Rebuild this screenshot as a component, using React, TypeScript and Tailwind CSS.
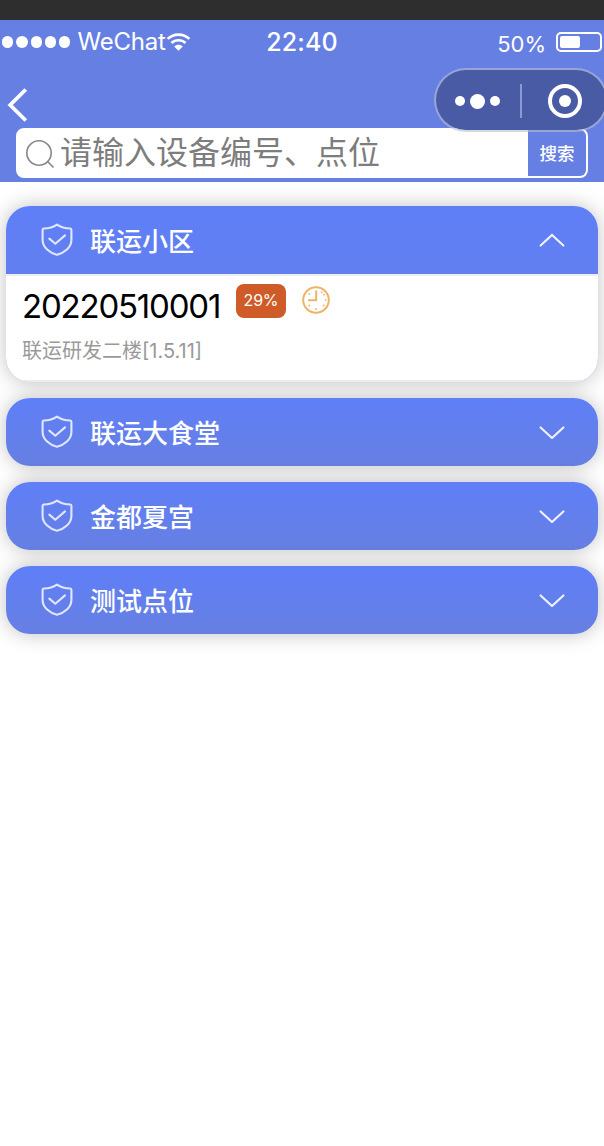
import { useState } from "react";

type Device = {
  id: string;
  level: string;
  place: string;
};

type Site = {
  name: string;
  devices: Device[];
};

const sites: Site[] = [
  {
    name: "联运小区",
    devices: [{ id: "20220510001", level: "29%", place: "联运研发二楼[1.5.11]" }],
  },
  { name: "联运大食堂", devices: [] },
  { name: "金都夏宫", devices: [] },
  { name: "测试点位", devices: [] },
];

function WifiIcon() {
  return (
    <svg width="25" height="20" viewBox="0 0 26 20" fill="none" stroke="#fff" strokeWidth="2.7">
      <path d="M1.7 6.8C8 .8 18 .8 24.3 6.8" />
      <path d="M5.7 11.1C9.8 7.2 16.2 7.2 20.3 11.1" />
      <path d="M13 19.2L8.5 14.7C11.2 12.4 14.8 12.4 17.5 14.7Z" fill="#fff" stroke="none" />
    </svg>
  );
}

function ShieldIcon() {
  return (
    <svg
      width="32"
      height="34"
      viewBox="0 0 32 34"
      fill="none"
      stroke="#e0e6ff"
      strokeWidth="2.1"
      strokeLinecap="round"
      strokeLinejoin="round"
    >
      <path d="M16 1.6C12.5 4 7.5 5.4 2.7 5.5Q1.6 5.6 1.6 6.8V17C1.6 24.5 8.8 30.2 16 31.8C23.2 30.2 30.4 24.5 30.4 17V6.8Q30.4 5.6 29.3 5.5C24.5 5.4 19.5 4 16 1.6Z" />
      <path d="M8.3 15.6L14.3 20.8L24 12.4" />
    </svg>
  );
}

function Chevron({ open }: { open: boolean }) {
  return (
    <svg width="26" height="14" viewBox="0 0 26 14" fill="none" stroke="#f0f3ff" strokeWidth="2.1">
      <path d={open ? "M1.6 12.6L13 2L24.4 12.6" : "M1.6 2.4L13 13L24.4 2.4"} strokeLinecap="round" />
    </svg>
  );
}

function ClockIcon() {
  return (
    <svg width="28" height="28" viewBox="0 0 28 28" fill="none" stroke="#efb368">
      <circle cx="14" cy="14" r="12.8" strokeWidth="2" />
      <path d="M14.2 4.6V14.2H6" strokeWidth="2" />
      <path
        d="M19.6 6.2l.1.2M22 8.6l-.2.1M23.4 14h.4M21.6 19.4l.2.2M14 22.8v.4M7.2 19.6l.2-.2M7.2 7.8l.2.2"
        strokeWidth="1.7"
        strokeLinecap="round"
      />
    </svg>
  );
}

function StatusBar() {
  return (
    <div className="grid h-11 grid-cols-3 items-center text-white">
      <div className="flex items-center pl-0.5">
        <div className="flex gap-[3px]">
          {[0, 1, 2, 3, 4].map((n) => (
            <span key={n} className="size-[11.3px] rounded-full bg-white" />
          ))}
        </div>
        <span className="ml-[7px] text-[24px] leading-none tracking-[-0.2px]">WeChat</span>
        <WifiIcon />
      </div>
      <div className="text-center text-[25px] leading-none font-medium tracking-[0.1px]">
        <span>22:40</span>
      </div>
      <div className="flex items-center justify-end gap-2.5 pr-0.5">
        <span className="pt-1 text-[22px] leading-none">50%</span>
        <span className="flex h-5 w-[46px] rounded-[5px] border-2 border-white p-0.5">
          <span className="h-3 w-5 rounded-[2px] bg-white" />
        </span>
      </div>
    </div>
  );
}

function Capsule() {
  return (
    <div className="absolute top-12 -right-1 flex h-16 w-[174px] items-center rounded-full border-2 border-[#b9bcc9]/60 bg-[#4a5ba6] bg-clip-padding">
      <div className="flex flex-1 items-center justify-center gap-[5px] pt-0.5 pr-px">
        <span className="size-2.5 rounded-full bg-white" />
        <span className="size-[15px] rounded-full bg-white" />
        <span className="size-2.5 rounded-full bg-white" />
      </div>
      <span className="mt-0.5 h-[34px] w-0.5 bg-[#8d99cf]" />
      <div className="flex flex-1 items-center justify-center pl-0.5">
        <span className="mt-0.5 flex size-[34px] items-center justify-center rounded-full border-4 border-white">
          <span className="size-3 rounded-full bg-white" />
        </span>
      </div>
    </div>
  );
}

function SearchBar() {
  return (
    <div className="mx-4 flex h-[50px] items-center rounded-lg border-2 border-white bg-white">
      <svg
        className="mt-0.5 ml-2 shrink-0"
        width="28"
        height="28"
        viewBox="0 0 28 28"
        fill="none"
        stroke="#888"
        strokeWidth="1.6"
      >
        <circle cx="13" cy="13" r="12.2" />
        <path d="M21.7 21.7L27.5 27.4" />
      </svg>
      <span className="ml-1.5 flex-1 text-[32px] leading-[46px] text-[#7d7d7d]">
        请输入设备编号、点位
      </span>
      <button className="h-[46px] w-[58px] rounded-r-md bg-[#667fe3] pt-0.5 text-[17.5px] font-medium text-white">
        搜索
      </button>
    </div>
  );
}

function SiteCard({ site, open, onToggle }: { site: Site; open: boolean; onToggle: () => void }) {
  return (
    <section className="overflow-hidden rounded-3xl bg-linear-to-b from-[#5f7ff8] to-[#667fe2] shadow-[0_0_20px_rgba(0,0,0,0.25)]">
      <button className="flex h-[68px] w-full items-center pr-[33px] pl-[35px] text-white" onClick={onToggle}>
        <ShieldIcon />
        <span className="ml-[17px] flex-1 pt-[3px] text-left text-[26px] leading-9 font-medium">
          {site.name}
        </span>
        <Chevron open={open} />
      </button>
      {open &&
        site.devices.map((device) => (
          <div key={device.id} className="h-[108px] border-y-2 border-[#eeeef0] bg-white px-4 pt-2">
            <div className="flex h-[46px] items-start">
              <span className="w-[198px] text-[33px] leading-[45px] tracking-[-1.2px] whitespace-nowrap text-black">
                {device.id}
              </span>
              <span className="ml-4 flex h-[34px] w-[50px] items-center justify-center rounded-lg bg-[#cf5b28] pb-0.5 text-[16px] tracking-[-0.2px] text-white">
                {device.level}
              </span>
              <span className="mt-0.5 ml-4">
                <ClockIcon />
              </span>
            </div>
            <p className="pt-[5px] text-[20px] leading-8 text-[#999]">{device.place}</p>
          </div>
        ))}
    </section>
  );
}

export default function App() {
  const [openSite, setOpenSite] = useState<string | null>("联运小区");

  return (
    <div className="min-h-[1146px] overflow-hidden bg-white font-['Inter','Noto_Sans_CJK_SC',sans-serif]">
      <div className="h-5 bg-[#2e2e2e]" />
      <header className="relative h-[162px] bg-[#667fe3]">
        <StatusBar />
        <div className="flex h-16 items-center pt-[17px] pl-[7px]">
          <svg width="22" height="34" viewBox="0 0 22 34" fill="none" stroke="#fff" strokeWidth="3.8">
            <path d="M18.8 1.5L3.2 17L18.8 32.5" />
          </svg>
        </div>
        <SearchBar />
        <Capsule />
      </header>
      <main className="flex flex-col gap-4 px-1.5 pt-6">
        {sites.map((site) => (
          <SiteCard
            key={site.name}
            site={site}
            open={openSite === site.name}
            onToggle={() => setOpenSite(openSite === site.name ? null : site.name)}
          />
        ))}
      </main>
    </div>
  );
}
